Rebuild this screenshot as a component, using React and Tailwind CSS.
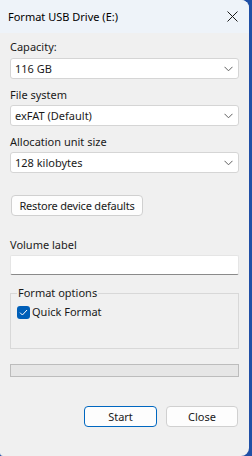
import React from "react";

function Chevron() {
  return (
    <svg width="9" height="6" viewBox="0 0 9 6" className="shrink-0">
      <path d="M0.5 0.8 L4.5 4.8 L8.5 0.8" fill="none" stroke="#5f5f5f" strokeWidth="1" />
    </svg>
  );
}

function Combo({ value }) {
  return (
    <div className="flex h-[21px] items-center justify-between rounded-[3px] border border-[#d5d5d5] bg-white pl-[4px] pr-[5px]">
      <span className="whitespace-nowrap text-[11px] leading-[16px] text-[#1a1a1a]">{value}</span>
      <Chevron />
    </div>
  );
}

function Label({ children, className = "" }) {
  return <div className={"h-[16px] whitespace-nowrap text-[11px] leading-[16px] text-[#1a1a1a] " + className}>{children}</div>;
}

export default function App() {
  return (
    <div className="h-[456px] w-[252px] bg-[#1f4fa6]" style={{ fontFamily: '"Noto Sans", "Open Sans", sans-serif' }}>
      <div className="flex h-[456px] w-[249px] flex-col overflow-hidden rounded-r-[8px] rounded-bl-[3px] bg-[#f0f0f0]">
        <div className="flex h-[33px] shrink-0 items-center justify-between bg-[#eef3f9] pl-[8px] pr-[11px]">
          <span className="whitespace-nowrap text-[11px] leading-[16px] text-black">Format USB Drive (E:)</span>
          <svg width="11" height="11" viewBox="0 0 11 11">
            <path d="M0.5 0.5 L10.5 10.5 M10.5 0.5 L0.5 10.5" stroke="#1a1a1a" strokeWidth="1" />
          </svg>
        </div>
        <div className="flex flex-col pl-[10px] pr-[10px]">
          <Label className="mt-[6px]">Capacity:</Label>
          <div className="mt-[3px]"><Combo value="116 GB" /></div>
          <Label className="mt-[8px]">File system</Label>
          <div className="mt-[2px]"><Combo value="exFAT (Default)" /></div>
          <Label className="mt-[8px]">Allocation unit size</Label>
          <div className="mt-[2px]"><Combo value="128 kilobytes" /></div>
          <div className="mt-[22px] flex">
            <button className="ml-[1px] flex h-[21px] w-[132px] items-center justify-center whitespace-nowrap rounded-[4px] border border-[#d0d0d0] bg-[#fdfdfd] text-[11px] leading-[16px] tracking-[-0.2px] text-[#1a1a1a]">
              Restore device defaults
            </button>
          </div>
          <Label className="mt-[21px]">Volume label</Label>
          <div className="mt-[2px] h-[20px] rounded-[2px] border border-[#e5e5e5] border-b-[#8a8a8a] bg-white"></div>
          <fieldset className="mt-[10px] h-[64px] border border-[#d8d8d8] pl-[6px]">
            <legend className="whitespace-nowrap px-[1px] text-[11px] leading-[16px] text-[#1a1a1a]">Format options</legend>
            <div className="mt-[3px] flex items-center">
              <div className="flex h-[13px] w-[13px] items-center justify-center rounded-[3px] bg-[#005fb8]">
                <svg width="9" height="7" viewBox="0 0 9 7">
                  <path d="M1 3.6 L3.4 6 L8 1" fill="none" stroke="#ffffff" strokeWidth="1" />
                </svg>
              </div>
              <span className="ml-[2px] whitespace-nowrap text-[11px] leading-[16px] text-[#1a1a1a]">Quick Format</span>
            </div>
          </fieldset>
          <div className="mt-[15px] h-[13px] border border-[#bcbcbc] bg-[#e6e6e6]"></div>
          <div className="mt-[29px] flex justify-end gap-[9px] pr-[1px]">
            <button className="flex h-[21px] w-[73px] items-center justify-center rounded-[4px] border border-[#0067c0] bg-[#fdfdfd] text-[11px] leading-[16px] text-[#1a1a1a]">
              Start
            </button>
            <button className="flex h-[21px] w-[72px] items-center justify-center rounded-[4px] border border-[#d0d0d0] bg-[#fdfdfd] text-[11px] leading-[16px] text-[#1a1a1a]">
              Close
            </button>
          </div>
        </div>
      </div>
    </div>
  );
}
